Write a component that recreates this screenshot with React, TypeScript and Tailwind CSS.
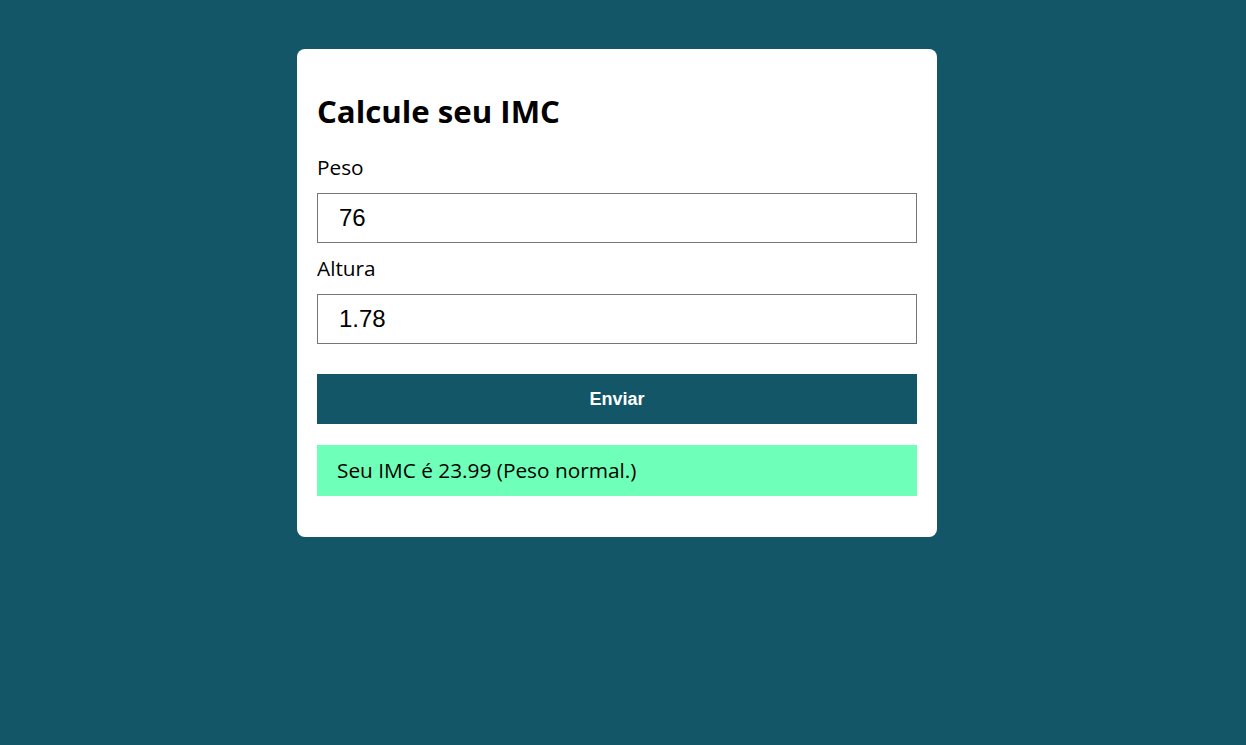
import { useState } from "react"

function classifica(imc: number) {
  if (imc < 18.5) return "Abaixo do peso."
  if (imc < 25) return "Peso normal."
  if (imc < 30) return "Sobrepeso."
  return "Obesidade."
}

export default function App() {
  const [peso, setPeso] = useState("76")
  const [altura, setAltura] = useState("1.78")
  const [resultado, setResultado] = useState("Seu IMC é 23.99 (Peso normal.)")

  function handleSubmit(event: React.FormEvent) {
    event.preventDefault()
    const p = Number(peso)
    const a = Number(altura)
    if (!p || !a) {
      setResultado("Valores inválidos")
      return
    }
    const imc = p / (a * a)
    setResultado(`Seu IMC é ${imc.toFixed(2)} (${classifica(imc)})`)
  }

  return (
    <div className="min-h-[745px] bg-[#125667] pr-3 pt-[49px] flex justify-center font-['Open_Sans','Noto_Sans',sans-serif]">
      <form
        onSubmit={handleSubmit}
        className="w-[640px] h-[488px] rounded-lg bg-white px-5 pt-[42px] flex flex-col"
      >
        <h1 className="text-[31.2px] leading-[40px] font-bold text-black">Calcule seu IMC</h1>
        <label htmlFor="peso" className="mt-[22px] text-[20.8px] leading-[28px] text-black">Peso</label>
        <input
          id="peso"
          value={peso}
          onChange={(e) => setPeso(e.target.value)}
          className="mt-3 h-[50px] w-full border border-[#767676] px-[21px] text-[24px] text-black outline-none font-['Liberation_Sans',Arial,sans-serif]"
        />
        <label htmlFor="altura" className="mt-[11px] text-[20.8px] leading-[28px] text-black">Altura</label>
        <input
          id="altura"
          value={altura}
          onChange={(e) => setAltura(e.target.value)}
          className="mt-3 h-[50px] w-full border border-[#767676] px-[21px] text-[24px] text-black outline-none font-['Liberation_Sans',Arial,sans-serif]"
        />
        <button
          type="submit"
          className="mt-[30px] h-[50px] w-full bg-[#125667] text-[18px] font-bold text-white font-['Liberation_Sans',Arial,sans-serif]"
        >
          Enviar
        </button>
        <div className="mt-[21px] h-[51px] flex items-center bg-[#6effb8] px-5 text-[20.8px] text-black">
          {resultado}
        </div>
      </form>
    </div>
  )
}
